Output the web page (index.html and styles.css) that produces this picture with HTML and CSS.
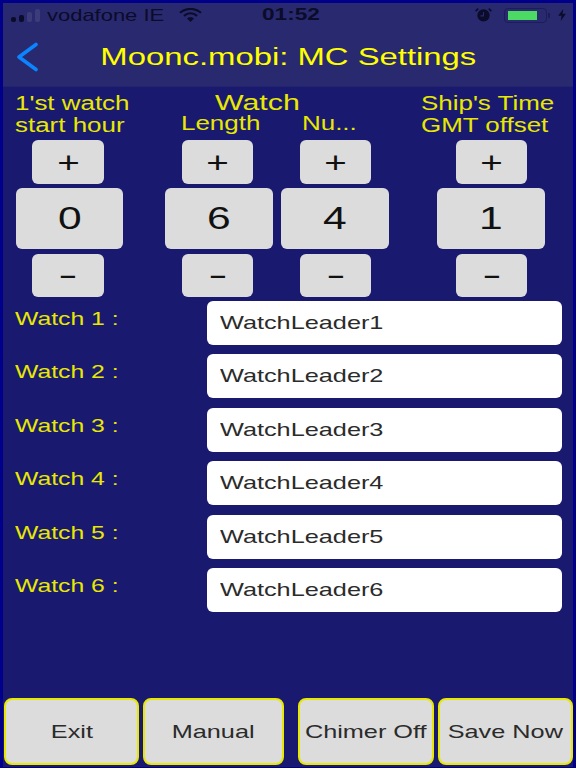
FILE: index.html
```html
<!DOCTYPE html>
<html lang="en">
  <head>
    <meta charset="UTF-8" />
    <meta name="viewport" content="width=device-width, initial-scale=1.0" />
    <title>Moonc.mobi: MC Settings</title>
    <link rel="stylesheet" href="styles.css">
  </head>
  <body>
    <div class="screen">
      <div class="top-bar">
        <div class="status-bar">
          <div class="status-left">
            <div class="signal">
              <i class="dot"></i><i class="dot"></i><i class="dot"></i><i class="dot"></i>
            </div>
            <span class="wide left carrier">vodafone IE</span>
            <svg class="wifi" width="25" height="14" viewBox="0 0 26 16">
              <path d="M1 5.5 C8 -0.5 18 -0.5 25 5.5" fill="none" stroke="#0b0b2a" stroke-width="2.4" />
              <path d="M5.5 9 C10 5.2 16 5.2 20.5 9" fill="none" stroke="#0b0b2a" stroke-width="2.4" />
              <path d="M9 12 L13 16 L17 12 C15 10 11 10 9 12 Z" fill="#0b0b2a" />
            </svg>
          </div>
          <span class="wide left clock">01:52</span>
          <div class="status-right">
            <svg class="alarm" width="19" height="14" viewBox="0 0 20 16">
              <circle cx="10" cy="8.5" r="7" fill="#0b0b2a" />
              <path d="M1 3.5 L4 0.8 M19 3.5 L16 0.8" stroke="#0b0b2a" stroke-width="2" />
              <path d="M10 4.5 V9 H6.5" fill="none" stroke="#29296f" stroke-width="1.2" />
            </svg>
            <div class="battery"><div class="battery-fill"></div></div>
            <i class="battery-tip"></i>
            <svg class="bolt" width="10" height="12" viewBox="0 0 10 14">
              <path d="M6.5 0 L0.5 8 H4.5 L3.5 14 L9.5 5.5 H5.5 Z" fill="#0b0b2a" />
            </svg>
          </div>
        </div>
        <div class="nav-bar">
          <svg class="back" width="24" height="30" viewBox="0 0 24 30">
            <path d="M21 2.5 L4 15 L21 27.5" fill="none" stroke="#0a84ff" stroke-width="3.6" stroke-linecap="round" stroke-linejoin="round" />
          </svg>
          <h1 class="title"><span class="wide">Moonc.mobi: MC Settings</span></h1>
        </div>
      </div>

      <div class="controls">
        <div class="column first">
          <div class="heading">
            <span class="wide left">1'st watch</span>
            <span class="wide left">start hour</span>
          </div>
          <div class="stepper">
            <div class="step"><span class="wide">+</span></div>
            <div class="value"><span class="wide">0</span></div>
            <div class="step minus"><span class="wide">-</span></div>
          </div>
        </div>

        <div class="column">
          <div class="heading watch-heading">
            <span class="wide left watch-title">Watch</span>
            <div class="sub-headings">
              <span class="sub length"><span class="wide left">Length</span></span>
              <span class="sub number"><span class="wide left">Nu...</span></span>
            </div>
          </div>
          <div class="stepper-pair">
            <div class="stepper length-stepper">
              <div class="step"><span class="wide">+</span></div>
              <div class="value"><span class="wide">6</span></div>
              <div class="step minus"><span class="wide">-</span></div>
            </div>
            <div class="stepper">
              <div class="step"><span class="wide">+</span></div>
              <div class="value"><span class="wide">4</span></div>
              <div class="step minus"><span class="wide">-</span></div>
            </div>
          </div>
        </div>

        <div class="column last">
          <div class="heading offset-heading">
            <span class="wide left">Ship's Time</span>
            <span class="wide left">GMT offset</span>
          </div>
          <div class="stepper">
            <div class="step"><span class="wide">+</span></div>
            <div class="value"><span class="wide">1</span></div>
            <div class="step minus"><span class="wide">-</span></div>
          </div>
        </div>
      </div>

      <div class="watch-list">
        <div class="watch-row">
          <span class="wide left watch-label">Watch 1 :</span>
          <div class="leader"><span class="wide left">WatchLeader1</span></div>
        </div>
        <div class="watch-row">
          <span class="wide left watch-label">Watch 2 :</span>
          <div class="leader"><span class="wide left">WatchLeader2</span></div>
        </div>
        <div class="watch-row">
          <span class="wide left watch-label">Watch 3 :</span>
          <div class="leader"><span class="wide left">WatchLeader3</span></div>
        </div>
        <div class="watch-row">
          <span class="wide left watch-label">Watch 4 :</span>
          <div class="leader"><span class="wide left">WatchLeader4</span></div>
        </div>
        <div class="watch-row">
          <span class="wide left watch-label">Watch 5 :</span>
          <div class="leader"><span class="wide left">WatchLeader5</span></div>
        </div>
        <div class="watch-row">
          <span class="wide left watch-label">Watch 6 :</span>
          <div class="leader"><span class="wide left">WatchLeader6</span></div>
        </div>
      </div>

      <div class="actions">
        <button class="action"><span class="wide">Exit</span></button>
        <button class="action manual"><span class="wide">Manual</span></button>
        <button class="action chimer"><span class="wide">Chimer Off</span></button>
        <button class="action"><span class="wide">Save Now</span></button>
      </div>
    </div>
  </body>
</html>
```

FILE: styles.css
```css
* {
  box-sizing: border-box;
}
html, body {
  margin: 0;
  height: 100%;
}
body {
  font-family: "Liberation Sans", Arial, sans-serif;
  background-color: #191970;
}
.screen {
  width: 576px;
  height: 768px;
  display: flex;
  flex-direction: column;
  background-color: #191970;
  border-style: solid;
  border-color: #00008b;
  border-width: 3px 3px 1px 3px;
  overflow: hidden;
}
/* the whole app was photographed stretched sideways, so text is widened */
.wide {
  display: inline-block;
  white-space: nowrap;
  transform: scaleX(1.33);
}
.wide.left {
  transform-origin: left center;
}

.top-bar {
  height: 84px;
  flex: none;
  background-color: #29296f;
  border-bottom: 1px solid #24246c;
}
.status-bar {
  height: 24px;
  display: flex;
  align-items: center;
  position: relative;
  color: #0b0b2a;
  font-size: 16.5px;
}
.status-left {
  display: flex;
  align-items: center;
  padding-left: 8px;
}
.signal {
  display: flex;
  align-items: flex-end;
  gap: 3px;
  width: 36px;
  height: 13px;
}
.dot {
  width: 5px;
  height: 5px;
  background-color: #0b0b2a;
  border-radius: 2px;
}
.dot:nth-child(2) { height: 7px; }
.dot:nth-child(3) { height: 10px; background-color: #3c3c7a; }
.dot:nth-child(4) { height: 13px; background-color: #3c3c7a; }
.carrier {
  width: 89px;
}
.wifi {
  margin-left: 42px;
}
.clock {
  position: absolute;
  left: 259px;
  font-size: 17px;
  font-weight: bold;
}
.status-right {
  margin-left: auto;
  display: flex;
  align-items: center;
  padding-right: 6px;
}
.battery {
  width: 43px;
  height: 15px;
  margin-left: 11px;
  padding: 2px 3px;
  border: 1px solid #1c1c58;
  border-radius: 4px;
}
.battery-fill {
  width: 29px;
  height: 100%;
  background-color: #4cd964;
}
.battery-tip {
  width: 2px;
  height: 5px;
  margin-left: 1px;
  background-color: #1c1c58;
}
.bolt {
  margin-left: 7px;
}
.nav-bar {
  height: 59px;
  display: flex;
  align-items: center;
  justify-content: center;
  position: relative;
}
.back {
  position: absolute;
  left: 12px;
  top: 15px;
}
.title {
  margin: 0;
  font-size: 24.7px;
  font-weight: normal;
  color: #ffff00;
}

.controls {
  display: flex;
  padding-left: 13px;
  gap: 42px;
  color: #e8e800;
}
.column {
  display: flex;
  flex-direction: column;
}
.column.last {
  margin-left: 6px;
}
.heading {
  height: 53px;
  padding-top: 5px;
  font-size: 19.5px;
  line-height: 22px;
  display: flex;
  flex-direction: column;
  align-items: flex-start;
}
.column.first .heading {
  margin-left: -1px;
}
.watch-heading {
  padding-top: 3px;
}
.offset-heading {
  margin-left: -16px;
}
.watch-title {
  margin-left: 50px;
  font-size: 22.8px;
  line-height: 24px;
}
.sub-headings {
  display: flex;
  margin-top: -2px;
}
.sub.length {
  width: 121px;
  padding-left: 16px;
}
.sub.number {
  padding-left: 16px;
}
.stepper-pair {
  display: flex;
  gap: 8px;
}
.stepper {
  width: 108px;
  display: flex;
  flex-direction: column;
  align-items: flex-start;
  color: #111;
}
.column.first .stepper {
  width: 107px;
}
.step {
  width: 71px;
  height: 44px;
  margin-left: 19px;
  display: flex;
  align-items: center;
  justify-content: center;
  background-color: #dcdcdc;
  border-radius: 6px;
  font-size: 29px;
  padding-top: 3px;
}
.column.first .step {
  width: 72px;
  margin-left: 16px;
}
.length-stepper .step {
  margin-left: 17px;
}
.minus {
  margin-top: 5px;
  height: 43px;
  padding-top: 0;
}
.minus .wide {
  transform: scaleX(2);
}
.value {
  width: 100%;
  height: 61px;
  margin-top: 4px;
  display: flex;
  align-items: center;
  justify-content: center;
  background-color: #dcdcdc;
  border-radius: 6px;
  font-size: 32px;
}

.watch-list {
  display: flex;
  flex-direction: column;
  gap: 9.4px;
  margin-top: 4px;
}
.watch-row {
  height: 44px;
  display: flex;
  padding-left: 12px;
}
.watch-label {
  width: 192px;
  padding-top: 7px;
  font-size: 18.6px;
  line-height: 22px;
  color: #e8e800;
}
.leader {
  width: 355px;
  display: flex;
  align-items: center;
  padding-left: 13px;
  background-color: #fff;
  border-radius: 6px;
  font-size: 19px;
  color: #2b2b2b;
}

.actions {
  margin-top: auto;
  display: flex;
  gap: 4px;
  padding: 0 0 2px 1px;
}
.action {
  width: 135px;
  height: 67px;
  padding: 0;
  background-color: #dcdcdc;
  border: 2px solid #e8e800;
  border-radius: 8px;
  font-family: inherit;
  font-size: 19px;
  color: #2b2b2b;
}
.action.manual {
  width: 141px;
  margin-right: 10px;
}
.action.chimer {
  width: 136px;
}
```
